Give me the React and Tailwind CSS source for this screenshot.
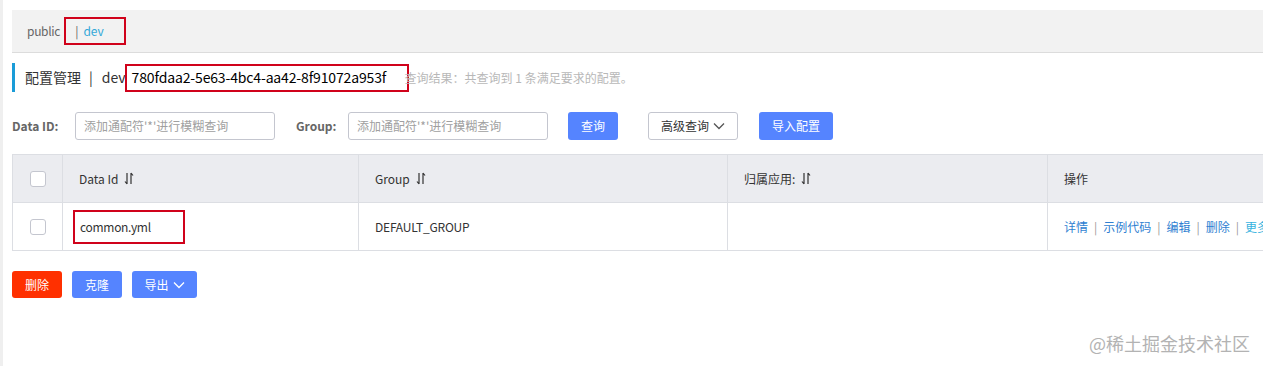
import React from "react";

const font = { fontFamily: '"Noto Sans CJK SC", "Noto Sans", sans-serif' };

function SortIcon() {
  return (
    <svg width="10" height="13" viewBox="0 0 10 13" className="ml-[6px] inline-block" fill="none" stroke="#333" strokeWidth="1.2">
      <path d="M3 1 V12 M1 9.5 L3 12" />
      <path d="M7 12 V1 M7 1 L9 3.5" />
    </svg>
  );
}

function Chevron({ color = "#fff" }) {
  return (
    <svg width="12" height="8" viewBox="0 0 12 8" className="ml-[4px]" fill="none" stroke={color} strokeWidth="1.3">
      <path d="M1 1.5 L6 6.5 L11 1.5" />
    </svg>
  );
}

function Checkbox() {
  return <span className="block w-[16px] h-[16px] rounded-[3px] border border-[#c4c6cf] bg-white" />;
}

export default function App() {
  return (
    <div className="w-[1263px] h-[366px] overflow-hidden bg-white flex relative text-[#333]" style={font}>
      <div className="w-[3px] shrink-0 bg-[#efefef]" />
      <div className="flex-1 min-w-0 flex flex-col pt-[10px] pl-[9px]">
        {/* namespace bar */}
        <div className="h-[43px] bg-[#f2f2f2] border-b border-[#dcdcdc] flex items-center pl-[15px] text-[12px]">
          <span className="text-[#666] tracking-[-0.3px]">public</span>
          <span className="ml-[4px] h-[28px] w-[62px] border-2 border-[#d0021b] flex items-center pl-[9px]">
            <span className="text-[#666]">|</span>
            <span className="ml-[5px] text-[#33a8d8]">dev</span>
          </span>
        </div>

        {/* title */}
        <div className="mt-[10px] h-[29px] flex items-center border-l-[3px] border-[#1a9cd8] pl-[10px]">
          <span className="text-[14px] text-[#333]">配置管理</span>
          <span className="text-[14px] text-[#333] ml-[8px]">|</span>
          <span className="text-[14px] text-[#333] ml-[9px]">dev</span>
          <span className="-ml-[1px] h-[28px] w-[284px] border-2 border-[#d0021b] flex items-center pl-[5px] text-[14px] text-black tracking-[-0.15px]">
            780fdaa2-5e63-4bc4-aa42-8f91072a953f
          </span>
          <span className="-ml-[4px] text-[12px] text-[#b8b8b8]">查询结果：共查询到 1 条满足要求的配置。</span>
        </div>

        {/* search row */}
        <div className="mt-[20px] h-[28px] flex items-center text-[12px]">
          <span className="font-bold text-[#666] w-[63px]">Data ID:</span>
          <div className="w-[200px] h-[28px] border border-[#c4c6cf] rounded-[3px] flex items-center pl-[8px] text-[#a0a0a0]">
            添加通配符'*'进行模糊查询
          </div>
          <span className="font-bold text-[#666] ml-[21px] w-[52px]">Group:</span>
          <div className="w-[200px] h-[28px] border border-[#c4c6cf] rounded-[3px] flex items-center pl-[8px] text-[#a0a0a0]">
            添加通配符'*'进行模糊查询
          </div>
          <button className="ml-[20px] w-[50px] h-[28px] rounded-[3px] bg-[#5584ff] text-white text-[12px]">查询</button>
          <button className="ml-[30px] w-[90px] h-[28px] rounded-[3px] border border-[#c4c6cf] bg-white text-[#333] text-[12px] flex items-center justify-center">
            高级查询<Chevron color="#555" />
          </button>
          <button className="ml-[21px] w-[74px] h-[28px] rounded-[3px] bg-[#5584ff] text-white text-[12px]">导入配置</button>
        </div>

        {/* table */}
        <div className="mt-[14px] w-[1300px] border-t border-l border-[#dcdee3] text-[12px]">
          <div className="flex h-[48px] bg-[#ebecf0] border-b border-[#dcdee3]">
            <div className="w-[50px] shrink-0 border-r border-[#dcdee3] flex items-center justify-center"><Checkbox /></div>
            <div className="w-[296px] shrink-0 border-r border-[#dcdee3] flex items-center pl-[16px]">Data Id<SortIcon /></div>
            <div className="w-[369px] shrink-0 border-r border-[#dcdee3] flex items-center pl-[16px]">Group<SortIcon /></div>
            <div className="w-[320px] shrink-0 border-r border-[#dcdee3] flex items-center pl-[16px]">归属应用:<SortIcon /></div>
            <div className="flex-1 flex items-center pl-[16px]">操作</div>
          </div>
          <div className="flex h-[48px] bg-white border-b border-[#dcdee3]">
            <div className="w-[50px] shrink-0 border-r border-[#dcdee3] flex items-center justify-center"><Checkbox /></div>
            <div className="w-[296px] shrink-0 border-r border-[#dcdee3] flex items-center pl-[10px]">
              <span className="h-[34px] w-[112px] border-2 border-[#d0021b] flex items-center pl-[5px] text-[#333] tracking-[-0.3px]">common.yml</span>
            </div>
            <div className="w-[369px] shrink-0 border-r border-[#dcdee3] flex items-center pl-[16px] tracking-[-0.2px]">DEFAULT_GROUP</div>
            <div className="w-[320px] shrink-0 border-r border-[#dcdee3]" />
            <div className="flex-1 flex items-center pl-[16px] text-[#2f7fd1] whitespace-nowrap">
              <span>详情</span><span className="text-[#999] mx-[6px]">|</span>
              <span>示例代码</span><span className="text-[#999] mx-[6px]">|</span>
              <span>编辑</span><span className="text-[#999] mx-[6px]">|</span>
              <span>删除</span><span className="text-[#999] mx-[6px]">|</span>
              <span className="text-[#38b3e0]">更多</span>
            </div>
          </div>
        </div>

        {/* bottom buttons */}
        <div className="mt-[20px] flex items-center text-[12px]">
          <button className="w-[50px] h-[27px] rounded-[3px] bg-[#ff3000] text-white">删除</button>
          <button className="ml-[10px] w-[50px] h-[27px] rounded-[3px] bg-[#5584ff] text-white">克隆</button>
          <button className="ml-[10px] w-[65px] h-[27px] rounded-[3px] bg-[#5584ff] text-white flex items-center justify-center">
            导出<Chevron />
          </button>
        </div>
      </div>

      <div className="absolute right-[13px] bottom-[12px] text-[18px] leading-[22px] text-[#b3b3b3]">@稀土掘金技术社区</div>
    </div>
  );
}
